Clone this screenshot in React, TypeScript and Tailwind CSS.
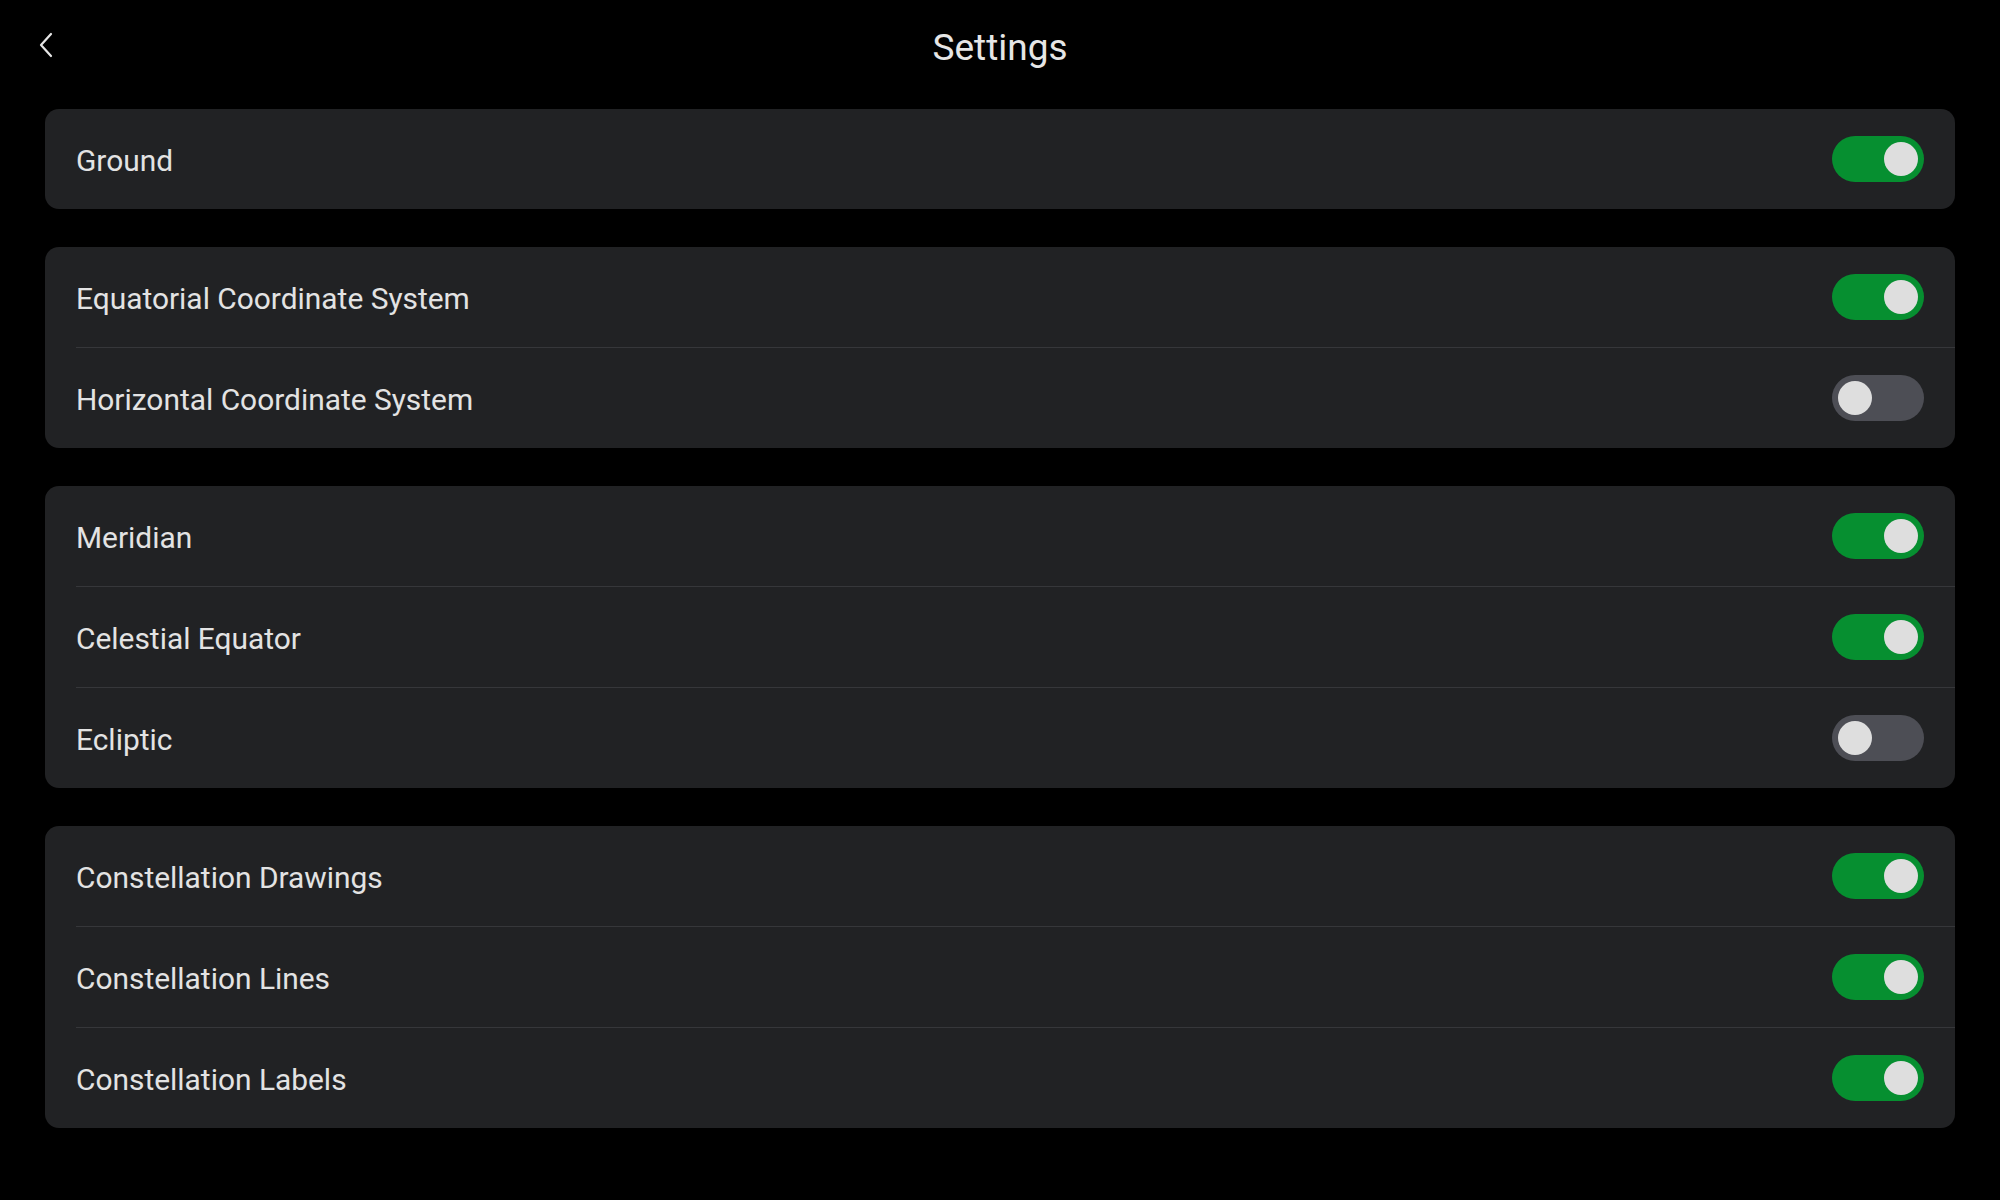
import React from "react";

type Item = { label: string; on: boolean };

const groups: Item[][] = [
  [{ label: "Ground", on: true }],
  [
    { label: "Equatorial Coordinate System", on: true },
    { label: "Horizontal Coordinate System", on: false },
  ],
  [
    { label: "Meridian", on: true },
    { label: "Celestial Equator", on: true },
    { label: "Ecliptic", on: false },
  ],
  [
    { label: "Constellation Drawings", on: true },
    { label: "Constellation Lines", on: true },
    { label: "Constellation Labels", on: true },
  ],
];

function Toggle({ on }: { on: boolean }) {
  return (
    <div
      className={
        "flex h-[46px] w-[92px] items-center rounded-full px-[6px] " +
        (on ? "justify-end bg-[#068f30]" : "justify-start bg-[#4d4e55]")
      }
    >
      <div className="h-[34px] w-[34px] rounded-full bg-[#dedede]" />
    </div>
  );
}

export default function App() {
  return (
    <div
      className="min-h-[1200px] w-full bg-black text-[#e3e3e3]"
      style={{ fontFamily: "Roboto, 'Noto Sans', sans-serif" }}
    >
      <div className="relative flex h-[94px] items-center justify-center">
        <button className="absolute left-[34px] top-[30px] flex h-[30px] w-[24px] items-center justify-center">
          <svg width="18" height="28" viewBox="0 0 18 28" fill="none">
            <path d="M14 3 L4 14 L14 25" stroke="#e6e6e6" strokeWidth="2.2" strokeLinecap="round" strokeLinejoin="round" />
          </svg>
        </button>
        <h1 className="text-[37px] font-normal leading-none text-[#e6e6e6]">Settings</h1>
      </div>
      <div className="flex flex-col gap-[38px] px-[45px] pt-[15px]">
        {groups.map((g, gi) => (
          <div key={gi} className="overflow-hidden rounded-[14px] bg-[#212224]">
            {g.map((it, i) => (
              <div key={it.label} className={i > 0 ? "ml-[31px] border-t border-[#36373a]" : "ml-[31px]"}>
                <div className="flex h-[100px] items-center justify-between pr-[31px]">
                  <span className="pt-[4px] text-[29.9px] leading-none text-[#e3e3e3]">{it.label}</span>
                  <Toggle on={it.on} />
                </div>
              </div>
            ))}
          </div>
        ))}
      </div>
    </div>
  );
}
